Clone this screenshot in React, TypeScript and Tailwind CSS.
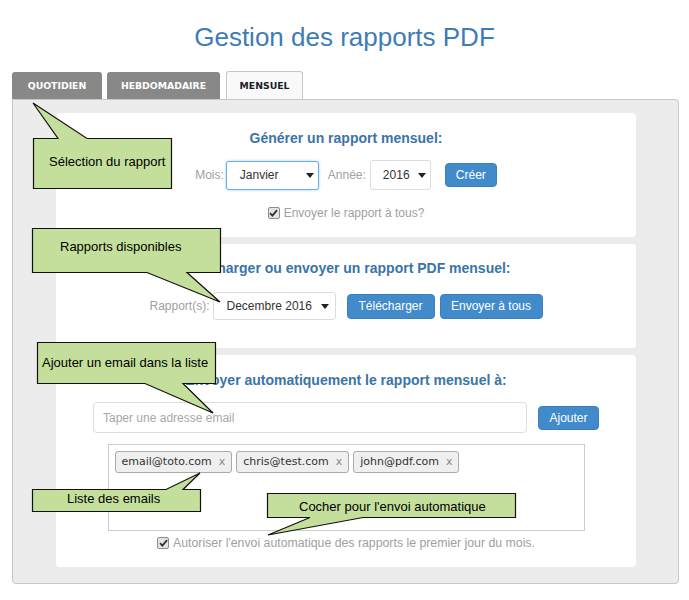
import React from "react";

const Caret = () => (
  <svg width="8" height="5" viewBox="0 0 8 5" className="shrink-0">
    <path d="M0 0H8L4 5Z" fill="#222" />
  </svg>
);

const Check = () => (
  <span className="inline-flex w-[12px] h-[12px] shrink-0 items-center justify-center rounded-[2px] border border-[#8c8c8c] bg-[#e4e4e4]">
    <svg width="9" height="8" viewBox="0 0 9 8">
      <path d="M1 4.2 L3.4 6.6 L8 1.2" stroke="#333" strokeWidth="1.8" fill="none" />
    </svg>
  </span>
);

const Btn = ({ children, w, h }: { children: React.ReactNode; w: string; h: string }) => (
  <div
    className={`flex items-center justify-center rounded-[4px] border border-[#3a80bf] bg-[#428bca] text-[12px] text-white ${w} ${h}`}
  >
    {children}
  </div>
);

const Tag = ({ label }: { label: string }) => (
  <div className="flex h-[22px] items-center rounded-[3px] border border-[#aaaaaa] bg-[#efefef] px-[6px] font-['DejaVu_Sans',sans-serif] text-[11px] text-[#333]">
    <span>{label}</span>
    <span className="ml-[7px] text-[#888]">x</span>
  </div>
);

export default function App() {
  return (
    <div className="relative h-[600px] w-[689px] overflow-hidden bg-white font-['Liberation_Sans',Arial,sans-serif]">
      <h1 className="pt-[19px] text-center text-[26px] leading-[36px] text-[#3d7cb4]">
        Gestion des rapports PDF
      </h1>

      <div className="ml-[12px] mt-[17px] flex h-[27px] items-end font-['DejaVu_Sans',sans-serif] text-[9.3px] font-bold">
        <div className="flex h-[27px] w-[90px] items-center justify-center rounded-t-[3px] bg-[#888888] text-white">
          QUOTIDIEN
        </div>
        <div className="ml-[5px] flex h-[27px] w-[113px] items-center justify-center rounded-t-[3px] bg-[#888888] text-white">
          HEBDOMADAIRE
        </div>
        <div className="ml-[6px] flex h-[28px] w-[77px] items-center justify-center rounded-t-[3px] border border-b-0 border-[#c8c8c8] bg-[#f9f9f9] text-[#1c1c2a]">
          MENSUEL
        </div>
      </div>

      <div className="ml-[12px] flex h-[485px] w-[667px] flex-col gap-[7px] rounded-b-[4px] rounded-tr-[4px] border border-[#c8c8c8] bg-[#ececec] pl-[43px] pt-[13px]">
        {/* Card 1 */}
        <div className="flex h-[124px] w-[580px] flex-col items-center rounded-[4px] bg-white pt-[15px]">
          <div className="text-[14px] font-bold leading-[20px] text-[#3b74a6]">Générer un rapport mensuel:</div>
          <div className="mt-[12px] flex items-center text-[12px]">
            <span className="text-[#a0a0a0]">Mois:</span>
            <div className="ml-[2px] flex h-[29px] w-[93px] items-center justify-between rounded-[3px] border border-[#66afe9] bg-white pl-[13px] pr-[4px] text-[#333] shadow-[0_0_3px_rgba(102,175,233,0.6)]">
              <span>Janvier</span>
              <Caret />
            </div>
            <span className="ml-[9px] text-[#a0a0a0]">Année:</span>
            <div className="ml-[4px] flex h-[30px] w-[61px] items-center justify-between rounded-[3px] border border-[#dcdcdc] bg-white pl-[12px] pr-[4px] text-[#333]">
              <span>2016</span>
              <Caret />
            </div>
            <div className="ml-[14px]">
              <Btn w="w-[52px]" h="h-[24px]">Créer</Btn>
            </div>
          </div>
          <div className="mt-[14px] flex items-center text-[12px] leading-[18px] text-[#a0a0a0]">
            <Check />
            <span className="ml-[4px]">Envoyer le rapport à tous?</span>
          </div>
        </div>

        {/* Card 2 */}
        <div className="flex h-[104px] w-[580px] flex-col items-center rounded-[4px] bg-white pt-[14px]">
          <div className="text-[14px] font-bold leading-[20px] text-[#3b74a6]">
            Télécharger ou envoyer un rapport PDF mensuel:
          </div>
          <div className="mt-[14px] flex items-center text-[12px]">
            <span className="text-[#a0a0a0]">Rapport(s):</span>
            <div className="ml-[3px] flex h-[28px] w-[123px] items-center justify-between rounded-[3px] border border-[#dcdcdc] bg-white pl-[13px] pr-[6px] text-[#333]">
              <span>Decembre 2016</span>
              <Caret />
            </div>
            <div className="ml-[11px]">
              <Btn w="w-[88px]" h="h-[25px]">Télécharger</Btn>
            </div>
            <div className="ml-[5px]">
              <Btn w="w-[103px]" h="h-[25px]">Envoyer à tous</Btn>
            </div>
          </div>
        </div>

        {/* Card 3 */}
        <div className="flex h-[212px] w-[580px] flex-col items-center rounded-[4px] bg-white pt-[15px]">
          <div className="text-[14px] font-bold leading-[20px] text-[#3b74a6]">
            Envoyer automatiquement le rapport mensuel à:
          </div>
          <div className="mt-[12px] flex items-center text-[12px]">
            <input
              className="h-[31px] w-[434px] rounded-[4px] border border-[#dddddd] bg-white pl-[9px] text-[12px] text-[#333] placeholder:text-[#a8a8a8] outline-none"
              placeholder="Taper une adresse email"
            />
            <div className="ml-[11px]">
              <Btn w="w-[61px]" h="h-[24px]">Ajouter</Btn>
            </div>
          </div>
          <div className="mt-[11px] flex h-[87px] w-[477px] flex-wrap content-start gap-[4px] border border-[#cccccc] bg-white p-[6px]">
            <Tag label="email@toto.com" />
            <Tag label="chris@test.com" />
            <Tag label="john@pdf.com" />
          </div>
          <div className="mt-[3px] flex items-center text-[12.3px] leading-[18px] text-[#a0a0a0]">
            <Check />
            <span className="ml-[4px]">Autoriser l'envoi automatique des rapports le premier jour du mois.</span>
          </div>
        </div>
      </div>

      {/* Callouts overlay */}
      <svg className="pointer-events-none absolute left-0 top-0" width="689" height="600" viewBox="0 0 689 600">
        <g fill="#c4df9b" stroke="#111" strokeWidth="1.2" strokeLinejoin="miter">
          <path d="M33.5 138.5 L58 138.5 L33 103 L87 138.5 L171.5 138.5 L171.5 188.5 L33.5 188.5 Z" />
          <path d="M32.5 228.5 L220.5 228.5 L220.5 272.5 L187 272.5 L220 302 L147 272.5 L32.5 272.5 Z" />
          <path d="M37.5 342.5 L215.5 342.5 L215.5 383.5 L183 383.5 L213 413 L145 383.5 L37.5 383.5 Z" />
          <path d="M32.5 489.5 L166 489.5 L200 473 L183 489.5 L200.5 489.5 L200.5 511.5 L32.5 511.5 Z" />
          <path d="M267.5 493.5 L515.5 493.5 L515.5 517.5 L363 517.5 L268 535 L310 517.5 L267.5 517.5 Z" />
        </g>
      </svg>
      <div className="pointer-events-none absolute left-[49px] top-[154px] text-[13px] leading-[16px] text-black">Sélection du rapport</div>
      <div className="pointer-events-none absolute left-[60px] top-[239px] text-[13px] leading-[16px] text-black">Rapports disponibles</div>
      <div className="pointer-events-none absolute left-[42px] top-[355px] text-[13px] leading-[16px] text-black">Ajouter un email dans la liste</div>
      <div className="pointer-events-none absolute left-[67px] top-[491px] text-[13px] leading-[16px] text-black">Liste des emails</div>
      <div className="pointer-events-none absolute left-[299px] top-[499px] text-[13px] leading-[16px] text-black">Cocher pour l'envoi automatique</div>
    </div>
  );
}
